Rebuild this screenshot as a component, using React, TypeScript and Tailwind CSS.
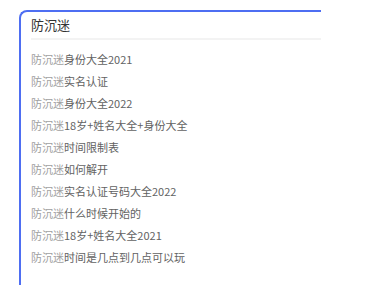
import React from "react";

const items: [string, string][] = [
  ["防沉迷", "身份大全2021"],
  ["防沉迷", "实名认证"],
  ["防沉迷", "身份大全2022"],
  ["防沉迷", "18岁+姓名大全+身份大全"],
  ["防沉迷", "时间限制表"],
  ["防沉迷", "如何解开"],
  ["防沉迷", "实名认证号码大全2022"],
  ["防沉迷", "什么时候开始的"],
  ["防沉迷", "18岁+姓名大全2021"],
  ["防沉迷", "时间是几点到几点可以玩"],
];

export default function App() {
  return (
    <div
      className="w-[381px] h-[296px] bg-white pt-[10px] pl-[19px] overflow-hidden"
      style={{ fontFamily: '"Microsoft YaHei", "Noto Sans CJK SC", sans-serif' }}
    >
      <div className="w-[302px] h-[275px] overflow-hidden">
        <div className="w-[360px] h-[300px] border-t-2 border-l-2 border-solid border-[#4e6ef2] rounded-tl-[8px] pl-[10px]">
          <div className="h-[28px] flex items-center border-b-2 border-[#f3f3f3] text-[13px] text-[#333]">
            防沉迷
          </div>
          <div className="pt-[8px]">
            {items.map(([a, b], i) => (
              <div key={i} className="h-[22px] leading-[22px] text-[11px] whitespace-nowrap">
                <span className="text-[#a0a0a0]">{a}</span>
                <span className="text-[#626262]">{b}</span>
              </div>
            ))}
          </div>
        </div>
      </div>
    </div>
  );
}
